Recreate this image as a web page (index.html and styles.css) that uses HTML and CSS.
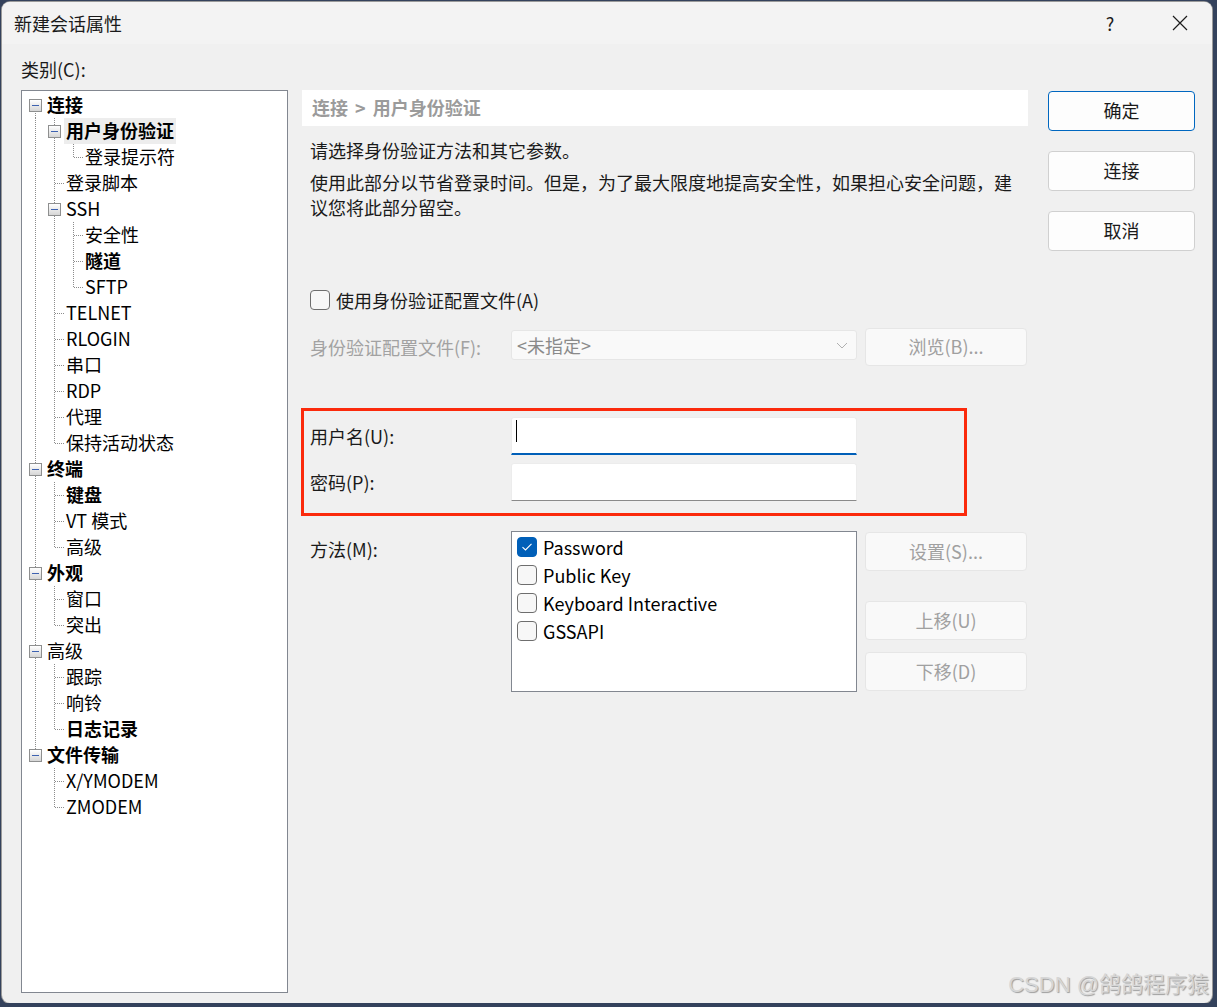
FILE: index.html
```html
<!DOCTYPE html>
<html lang="zh-CN">
<head>
    <meta charset="UTF-8">
    <title>新建会话属性</title>
    <link rel="stylesheet" href="styles.css">
</head>
<body>
    <div class="dialog">
        <div class="titlebar">
            <span class="title">新建会话属性</span>
            <span class="caption help">?</span>
            <span class="caption close">
                <svg width="16" height="16" viewBox="0 0 16 16"><path d="M1 1L15 15M15 1L1 15" stroke="#1b1b1b" stroke-width="1.2" fill="none"/></svg>
            </span>
        </div>

        <div class="main">
            <div class="left">
                <div class="cat-label">类别(C):</div>
                <div class="tree">
                    <div class="row"><span class="cell down"><i class="tg"></i></span><span class="lbl b">连接</span></div>
                    <div class="row"><span class="cell i"></span><span class="cell ud"><i class="tg"></i></span><span class="lbl b sel">用户身份验证</span></div>
                    <div class="row"><span class="cell i"></span><span class="cell i"></span><span class="cell l"></span><span class="lbl">登录提示符</span></div>
                    <div class="row"><span class="cell i"></span><span class="cell t"></span><span class="lbl">登录脚本</span></div>
                    <div class="row"><span class="cell i"></span><span class="cell ud"><i class="tg"></i></span><span class="lbl">SSH</span></div>
                    <div class="row"><span class="cell i"></span><span class="cell i"></span><span class="cell t"></span><span class="lbl">安全性</span></div>
                    <div class="row"><span class="cell i"></span><span class="cell i"></span><span class="cell t"></span><span class="lbl b">隧道</span></div>
                    <div class="row"><span class="cell i"></span><span class="cell i"></span><span class="cell l"></span><span class="lbl">SFTP</span></div>
                    <div class="row"><span class="cell i"></span><span class="cell t"></span><span class="lbl">TELNET</span></div>
                    <div class="row"><span class="cell i"></span><span class="cell t"></span><span class="lbl">RLOGIN</span></div>
                    <div class="row"><span class="cell i"></span><span class="cell t"></span><span class="lbl">串口</span></div>
                    <div class="row"><span class="cell i"></span><span class="cell t"></span><span class="lbl">RDP</span></div>
                    <div class="row"><span class="cell i"></span><span class="cell t"></span><span class="lbl">代理</span></div>
                    <div class="row"><span class="cell i"></span><span class="cell l"></span><span class="lbl">保持活动状态</span></div>
                    <div class="row"><span class="cell ud"><i class="tg"></i></span><span class="lbl b">终端</span></div>
                    <div class="row"><span class="cell i"></span><span class="cell t"></span><span class="lbl b">键盘</span></div>
                    <div class="row"><span class="cell i"></span><span class="cell t"></span><span class="lbl">VT 模式</span></div>
                    <div class="row"><span class="cell i"></span><span class="cell l"></span><span class="lbl">高级</span></div>
                    <div class="row"><span class="cell ud"><i class="tg"></i></span><span class="lbl b">外观</span></div>
                    <div class="row"><span class="cell i"></span><span class="cell t"></span><span class="lbl">窗口</span></div>
                    <div class="row"><span class="cell i"></span><span class="cell l"></span><span class="lbl">突出</span></div>
                    <div class="row"><span class="cell ud"><i class="tg"></i></span><span class="lbl">高级</span></div>
                    <div class="row"><span class="cell i"></span><span class="cell t"></span><span class="lbl">跟踪</span></div>
                    <div class="row"><span class="cell i"></span><span class="cell t"></span><span class="lbl">响铃</span></div>
                    <div class="row"><span class="cell i"></span><span class="cell l"></span><span class="lbl b">日志记录</span></div>
                    <div class="row"><span class="cell up"><i class="tg"></i></span><span class="lbl b">文件传输</span></div>
                    <div class="row"><span class="cell"></span><span class="cell t"></span><span class="lbl">X/YMODEM</span></div>
                    <div class="row"><span class="cell"></span><span class="cell l"></span><span class="lbl">ZMODEM</span></div>
                </div>
            </div>

            <div class="panel">
                <div class="crumb">连接 &gt; 用户身份验证</div>
                <div class="panel-body">
                    <p class="intro">请选择身份验证方法和其它参数。</p>
                    <p class="note">使用此部分以节省登录时间。但是，为了最大限度地提高安全性，如果担心安全问题，建议您将此部分留空。</p>

                    <div class="check-row"><span class="box"></span>使用身份验证配置文件(A)</div>

                    <div class="form-row profile">
                        <span class="field-label disabled">身份验证配置文件(F):</span>
                        <div class="combo">
                            <span>&lt;未指定&gt;</span>
                            <svg width="12" height="7" viewBox="0 0 12 7"><path d="M1 1L6 6L11 1" stroke="#b0b0b0" stroke-width="1" fill="none"/></svg>
                        </div>
                        <div class="btn disabled browse">浏览(B)...</div>
                    </div>

                    <div class="credentials">
                        <div class="form-row">
                            <span class="field-label">用户名(U):</span>
                            <div class="edit focused"><span class="caret"></span></div>
                        </div>
                        <div class="form-row">
                            <span class="field-label">密码(P):</span>
                            <div class="edit"></div>
                        </div>
                    </div>

                    <div class="form-row methods">
                        <span class="field-label">方法(M):</span>
                        <div class="listbox">
                            <div class="item"><span class="box checked"><svg width="12" height="10" viewBox="0 0 12 10"><path d="M1.5 5.2L4.5 8L10.5 1.8" stroke="#fff" stroke-width="1.1" fill="none"/></svg></span>Password</div>
                            <div class="item"><span class="box"></span>Public Key</div>
                            <div class="item"><span class="box"></span>Keyboard Interactive</div>
                            <div class="item"><span class="box"></span>GSSAPI</div>
                        </div>
                        <div class="side-btns">
                            <div class="btn disabled">设置(S)...</div>
                            <div class="btn disabled move-up">上移(U)</div>
                            <div class="btn disabled move-down">下移(D)</div>
                        </div>
                    </div>
                </div>
            </div>

            <div class="actions">
                <div class="btn primary">确定</div>
                <div class="btn">连接</div>
                <div class="btn">取消</div>
            </div>
        </div>

        <div class="watermark">CSDN @鸽鸽程序猿</div>
    </div>
</body>
</html>
```

FILE: styles.css
```css
html, body {
    margin: 0;
    padding: 0;
    background: #34425c;
}

body {
    font-family: "Noto Sans CJK SC", "Noto Sans", sans-serif;
    font-size: 18px;
    color: #1a1a1a;
}

.dialog {
    position: relative;
    width: 1210px;
    height: 1001px;
    margin: 2px 0 0 2px;
    background: #f0f0f0;
    border-radius: 8px;
    box-shadow: 0 0 0 1px #9a9a9a;
    overflow: hidden;
}

/* title bar */
.titlebar {
    height: 42px;
    display: flex;
    align-items: center;
    background: #f3f3f3;
    padding-left: 12px;
}

.title {
    flex: 1;
    line-height: 40px;
}

.caption {
    height: 42px;
    display: flex;
    align-items: center;
    justify-content: center;
}

.help {
    width: 52px;
    margin-right: 12px;
    color: #1b1b1b;
}

.close {
    width: 64px;
}

/* main area */
.main {
    display: flex;
    padding: 13px 0 0 19px;
}

.left {
    width: 267px;
}

.cat-label {
    line-height: 24px;
    margin-bottom: 9px;
}

.tree {
    --dot-v: repeating-linear-gradient(to bottom, #8c8c8c 0 1px, transparent 1px 2px);
    --dot-h: repeating-linear-gradient(to right, #8c8c8c 0 1px, transparent 1px 2px);
    height: 903px;
    box-sizing: border-box;
    border: 1px solid #828790;
    background: #fff;
    padding: 1px 0 0 4px;
    color: #000;
}

.row {
    display: flex;
    height: 26px;
}

.cell {
    flex: none;
    width: 19px;
    height: 26px;
    display: flex;
    align-items: center;
    padding-left: 3px;
    box-sizing: border-box;
    background-repeat: no-repeat;
}

.cell.i {
    background-image: var(--dot-v);
    background-size: 1px 26px;
    background-position: 9px 0;
}

.cell.t {
    background-image: var(--dot-v), var(--dot-h);
    background-size: 1px 26px, 9px 1px;
    background-position: 9px 0, 10px 13px;
}

.cell.l {
    background-image: var(--dot-v), var(--dot-h);
    background-size: 1px 14px, 9px 1px;
    background-position: 9px 0, 10px 13px;
}

.cell.ud {
    background-image: var(--dot-v);
    background-size: 1px 26px;
    background-position: 9px 0;
}

.cell.down {
    background-image: var(--dot-v);
    background-size: 1px 13px;
    background-position: 9px 13px;
}

.cell.up {
    background-image: var(--dot-v);
    background-size: 1px 13px;
    background-position: 9px 0;
}

.tg {
    display: block;
    width: 13px;
    height: 13px;
    box-sizing: border-box;
    border: 1px solid #8e8f8f;
    background:
        linear-gradient(#3e62b0, #3e62b0) center / 7px 1px no-repeat,
        linear-gradient(#ffffff, #d6d6d6);
}

.lbl {
    padding: 0 2px;
    height: 26px;
    line-height: 24px;
    white-space: nowrap;
}

.lbl.b {
    font-weight: 700;
}

.lbl.sel {
    background: #ededed;
}

/* right panel */
.panel {
    width: 726px;
    margin: 33px 0 0 14px;
}

.crumb {
    height: 36px;
    line-height: 34px;
    background: #fff;
    padding-left: 10px;
    color: #9b9b9b;
    font-weight: 700;
    word-spacing: 3px;
}

.panel-body {
    padding: 0 0 0 8px;
}

.panel-body p {
    margin: 0;
    line-height: 25px;
}

.intro {
    margin-top: 12px !important;
}

.note {
    margin-top: 7px !important;
}

.check-row {
    display: flex;
    align-items: center;
    height: 26px;
    margin-top: 67px;
    line-height: 24px;
}

.box {
    flex: none;
    width: 20px;
    height: 20px;
    box-sizing: border-box;
    border: 1px solid #6e6e6e;
    border-radius: 4px;
    background: #f7f7f7;
    margin-right: 6px;
    display: flex;
    align-items: center;
    justify-content: center;
}

.box.checked {
    background: #005fb8;
    border-color: #005fb8;
}

.form-row {
    display: flex;
    align-items: center;
}

.field-label {
    flex: none;
    width: 201px;
    line-height: 24px;
    white-space: nowrap;
}

.field-label.disabled {
    color: #a2a2a2;
}

.profile {
    align-items: flex-start;
    margin-top: 15px;
    height: 38px;
}

.profile .field-label {
    margin-top: 7px;
}

.combo {
    width: 346px;
    height: 30px;
    margin-top: 2px;
    box-sizing: border-box;
    border: 1px solid #e6e6e6;
    border-radius: 3px;
    background: #f9f9f9;
    display: flex;
    align-items: center;
    justify-content: space-between;
    padding: 0 8px 0 5px;
    color: #8a8a8a;
    line-height: 24px;
}

.btn {
    box-sizing: border-box;
    height: 40px;
    border: 1px solid #d0d0d0;
    border-radius: 4px;
    background: #fdfdfd;
    display: flex;
    align-items: center;
    justify-content: center;
    color: #1a1a1a;
    line-height: 24px;
    padding-bottom: 2px;
}

.btn.disabled {
    width: 162px;
    height: 39px;
    background: #f9f9f9;
    border-color: #e6e6e6;
    color: #a0a0a0;
}

.btn.browse {
    height: 38px;
    margin-left: 8px;
}

/* user / password block */
.credentials {
    width: 666px;
    margin: 42px 0 0 -9px;
    box-sizing: border-box;
    border: 3px solid #fb2a0c;
    padding: 6px 0 12px 6px;
    display: flex;
    flex-direction: column;
    gap: 8px;
}

.credentials .field-label {
    margin-top: -1px;
}

.edit {
    width: 346px;
    height: 38px;
    box-sizing: border-box;
    background: #fff;
    border: 1px solid #ececec;
    border-bottom: 1px solid #8a8a8a;
    border-radius: 3px 3px 0 0;
}

.edit.focused {
    border-bottom: 2px solid #005fb8;
}

.caret {
    display: block;
    width: 1px;
    height: 22px;
    margin: 2px 0 0 4px;
    background: #000;
}

/* methods */
.methods {
    align-items: flex-start;
    margin-top: 15px;
}

.methods .field-label {
    margin-top: 6px;
}

.listbox {
    width: 346px;
    height: 161px;
    box-sizing: border-box;
    border: 1px solid #828790;
    background: #fff;
    padding: 1px 0 0 5px;
}

.item {
    display: flex;
    align-items: center;
    height: 28px;
    line-height: 24px;
    color: #000;
}

.side-btns {
    margin-left: 8px;
    padding-top: 1px;
}

.move-up {
    margin-top: 30px;
}

.move-down {
    margin-top: 12px;
}

/* OK / connect / cancel */
.actions {
    width: 147px;
    margin: 34px 0 0 20px;
    display: flex;
    flex-direction: column;
    gap: 20px;
}

.btn.primary {
    border-color: #0067c0;
}

.watermark {
    position: absolute;
    right: 3px;
    bottom: 4px;
    line-height: 28px;
    font-family: "Liberation Sans", "Noto Sans CJK SC", sans-serif;
    font-size: 22px;
    color: #d6d6d6;
    text-shadow: 1px 1px 1px rgba(0, 0, 0, 0.35);
    white-space: nowrap;
}
```
